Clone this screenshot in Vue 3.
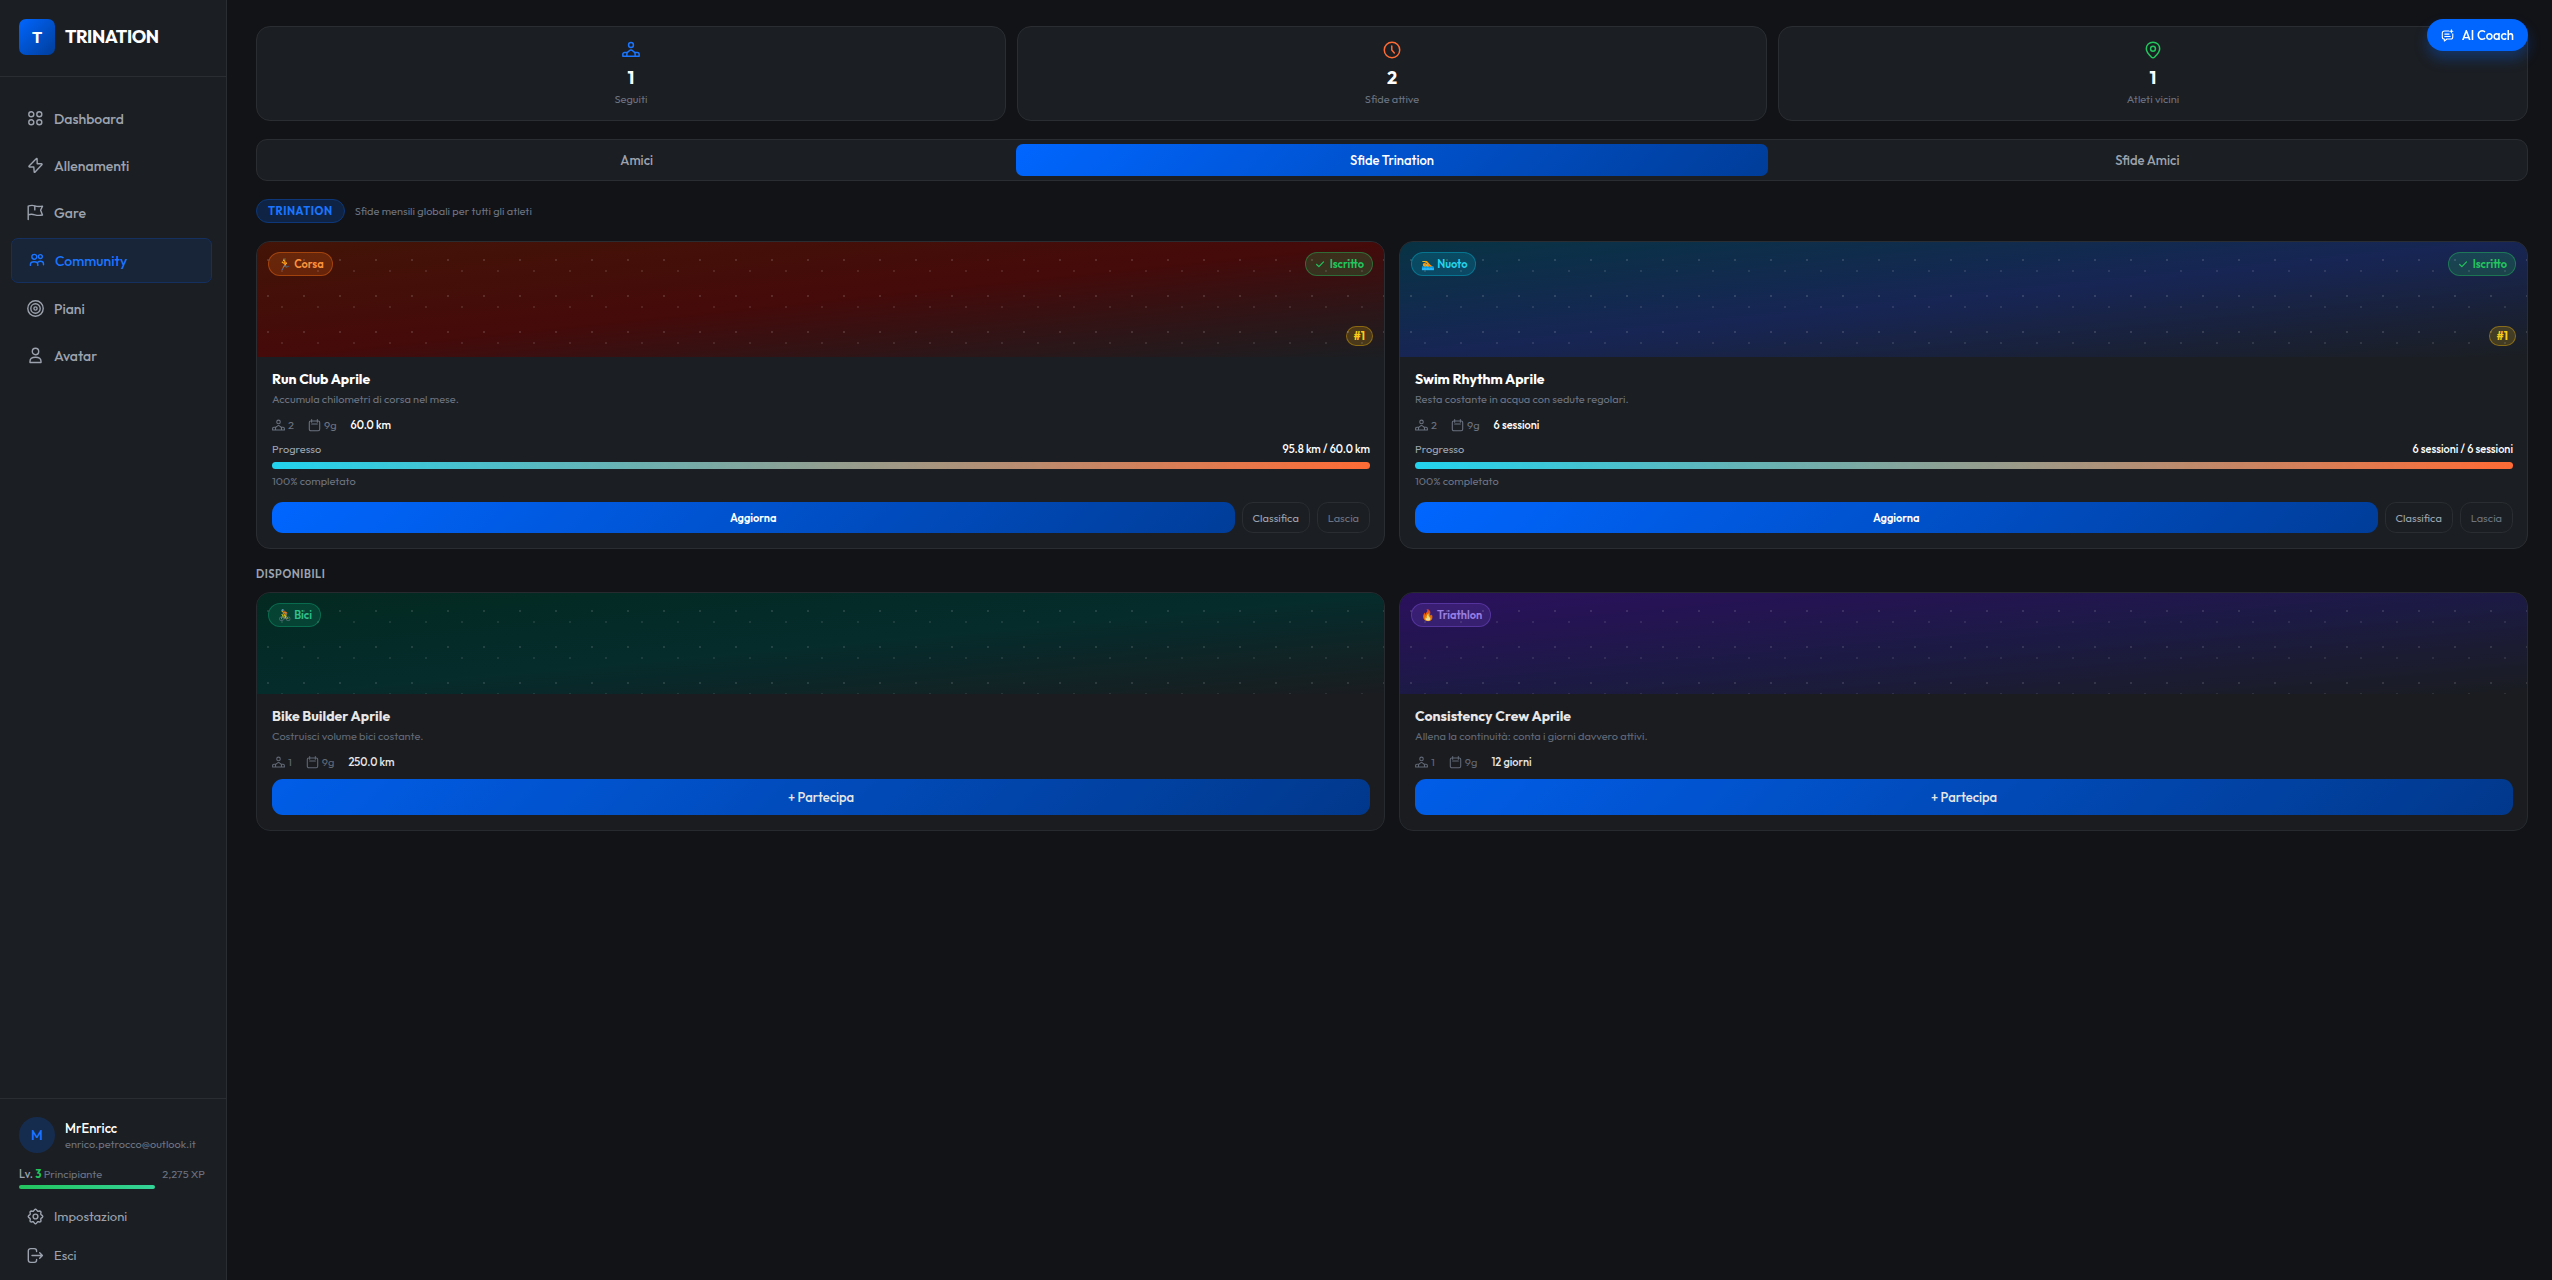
<script setup>
const navItems = [
  { label: 'Dashboard', icon: 'grid' },
  { label: 'Allenamenti', icon: 'bolt' },
  { label: 'Gare', icon: 'flag' },
  { label: 'Community', icon: 'people', active: true },
  { label: 'Piani', icon: 'target' },
  { label: 'Avatar', icon: 'person' },
]

const accountItems = [
  { label: 'Impostazioni', icon: 'gear' },
  { label: 'Esci', icon: 'exit' },
]

const stats = [
  { value: '1', label: 'Seguiti', icon: 'group', tone: 'blue' },
  { value: '2', label: 'Sfide attive', icon: 'clock', tone: 'orange' },
  { value: '1', label: 'Atleti vicini', icon: 'pin', tone: 'green' },
]

const tabs = [
  { label: 'Amici' },
  { label: 'Sfide Trination', active: true },
  { label: 'Sfide Amici' },
]

const joined = [
  {
    sport: 'run', emoji: '🏃', tag: 'Corsa', title: 'Run Club Aprile',
    text: 'Accumula chilometri di corsa nel mese.',
    people: 2, days: '9g', goal: '60.0 km', progress: '95.8 km / 60.0 km', percent: 100, rank: '#1',
  },
  {
    sport: 'swim', emoji: '🏊', tag: 'Nuoto', title: 'Swim Rhythm Aprile',
    text: 'Resta costante in acqua con sedute regolari.',
    people: 2, days: '9g', goal: '6 sessioni', progress: '6 sessioni / 6 sessioni', percent: 100, rank: '#1',
  },
]

const available = [
  {
    sport: 'bike', emoji: '🚴', tag: 'Bici', title: 'Bike Builder Aprile',
    text: 'Costruisci volume bici costante.', people: 1, days: '9g', goal: '250.0 km',
  },
  {
    sport: 'tri', emoji: '🔥', tag: 'Triathlon', title: 'Consistency Crew Aprile',
    text: 'Allena la continuità: conta i giorni davvero attivi.', people: 1, days: '9g', goal: '12 giorni',
  },
]

function gearOutline() {
  const points = []
  for (let i = 0; i < 48; i++) {
    const a = (i / 48) * Math.PI * 2
    const r = 6.5 + 0.8 * Math.cos(a * 8)
    points.push(`${(8.5 + r * Math.sin(a)).toFixed(2)} ${(8.5 - r * Math.cos(a)).toFixed(2)}`)
  }
  return `M${points.join('L')}Z`
}

const icons = {
  grid: 'M4.300 1.800a2.500 2.500 0 1 1 0 5 2.500 2.500 0 0 1 0-5ZM12.300 1.800a2.500 2.500 0 1 1 0 5 2.500 2.500 0 0 1 0-5ZM4.300 9.800a2.500 2.500 0 1 1 0 5 2.500 2.500 0 0 1 0-5ZM12.300 9.800a2.500 2.500 0 1 1 0 5 2.500 2.500 0 0 1 0-5Z',
  bolt: 'M9.200 1.700 2.100 9c-.4.5-.1 1 .5 1h4.200l.4 4.900c0 .5.600.6.900.2l6.800-7.300c.4-.5.100-1-.5-1h-4.200l-.1-4.900c0-.5-.6-.6-.9-.2Z',
  flag: 'M1.200 15.600V2.200C3 1.400 5.500 1 7.800 1.800s5 .9 7.700.3l-1.900 4.200 1.900 4.700c-2.700.6-5.200.5-7.700-.2s-4.700-.7-6.600.1M7.800 1.900v4',
  people: 'M6.300 2.400a2.400 2.400 0 1 1 0 4.900 2.400 2.400 0 0 1 0-4.900ZM12.400 2.600a1.900 1.900 0 1 1 0 3.900 1.900 1.900 0 0 1 0-3.900ZM2.400 13.400v-1c0-1.600 1.700-2.700 3.700-2.700s3.700 1.100 3.700 2.700v1M9.800 10.200c.7-.7 1.600-1 2.600-1 1.700 0 3.100 1 3.100 2.500v1.100',
  target: 'M8.500.8a7.700 7.700 0 1 1 0 15.400A7.700 7.700 0 0 1 8.500.8ZM8.500 3.800a4.700 4.700 0 1 1 0 9.400 4.700 4.700 0 0 1 0-9.400ZM8.500 6.900a1.600 1.600 0 1 1 0 3.200 1.600 1.600 0 0 1 0-3.200Z',
  person: 'M8.500 1.300a3.200 3.200 0 1 1 0 6.400 3.200 3.200 0 0 1 0-6.400ZM3 15.500v-1.300c0-2.500 2.200-4 5.500-4s5.500 1.500 5.500 4v1.300Z',
  gear: gearOutline() + 'M8.500 6.100a2.400 2.400 0 1 1 0 4.800 2.400 2.400 0 0 1 0-4.800Z',
  exit: 'M9.600 4.600V3.900A2.300 2.300 0 0 0 7.300 1.600H3.600A2.300 2.300 0 0 0 1.300 3.900v9.200a2.300 2.300 0 0 0 2.300 2.300h3.700a2.300 2.300 0 0 0 2.300-2.300v-.7M5 8.500h10.300M12.700 5.700l2.700 2.800-2.700 2.800',
  group: 'M8.500 1.500a2.300 2.300 0 1 1 0 4.600 2.300 2.300 0 0 1 0-4.600ZM4.600 14.400v-2.200c0-.8.4-1.400 1-1.900l1.200-1c.9-.9 2.500-.9 3.400 0l1.200 1c.6.5 1 1.100 1 1.900v2.200M4.600 10.900H2.500c-1 0-1.700.7-1.700 1.700v1.800h15.400v-1.800c0-1-.7-1.700-1.700-1.700h-2.100',
  clock: 'M8.500 1.200a7.300 7.300 0 1 1 0 14.600 7.300 7.300 0 0 1 0-14.600ZM8.300 4.700v3.900l2.400 2.700',
  pin: 'M8.500 1.100c3.600 0 6.300 2.700 6.300 6.200 0 3.200-2.600 5.700-4.700 7.800-.9.900-2.300.9-3.200 0-2.100-2.100-4.700-4.600-4.700-7.800 0-3.500 2.700-6.200 6.300-6.200ZM8.500 5a2.300 2.300 0 1 1 0 4.600 2.300 2.300 0 0 1 0-4.600Z',
  calendar: 'M3.600 2.600h9.800c1.100 0 1.900.8 1.900 1.900v9c0 1.100-.8 1.900-1.900 1.900H3.600c-1.100 0-1.900-.8-1.900-1.900v-9c0-1.100.8-1.900 1.900-1.900ZM4.800.8v3.400M12.200.8v3.400M4.800 6.600h7.400',
  chat: 'M10.300 2.700H4.400C2.800 2.700 1.700 3.800 1.700 5.400v5c0 1.600 1.100 2.700 2.700 2.700v2.700l3.300-2.700h5c1.600 0 2.700-1.100 2.700-2.700V6.300M5 6.700h5.600M5 9.700h7M13.600 1v3.800M11.700 2.900h3.800',
  check: 'M2.800 9.300 6.600 13 14.500 4.800',
}
</script>

<template>
  <div class="app">
    <aside class="sidebar">
      <div class="brand">
        <span class="logo">T</span>
        <span class="brand-name">TRINATION</span>
      </div>

      <nav class="nav" aria-label="Principale">
        <a v-for="item in navItems" :key="item.label" href="#" class="nav-link" :class="{ active: item.active }">
          <svg class="icon" viewBox="0 0 17 17"><path :d="icons[item.icon]" /></svg>
          {{ item.label }}
        </a>
      </nav>

      <div class="account">
        <div class="profile">
          <span class="avatar">M</span>
          <div>
            <div class="user-name">MrEnricc</div>
            <div class="user-mail">enrico.petrocco@outlook.it</div>
          </div>
        </div>
        <div class="level">
          <span><span class="lv">Lv. <b>3</b></span> Principiante</span>
          <span>2,275 XP</span>
        </div>
        <div class="level-bar"><div class="level-fill" :style="{ width: '73%' }"></div></div>
        <a v-for="item in accountItems" :key="item.label" href="#" class="account-link">
          <svg class="icon" viewBox="0 0 17 17"><path :d="icons[item.icon]" /></svg>
          {{ item.label }}
        </a>
      </div>
    </aside>

    <main class="main">
      <section class="stats">
        <div v-for="s in stats" :key="s.label" class="stat">
          <svg class="icon stat-icon" :class="s.tone" viewBox="0 0 17 17"><path :d="icons[s.icon]" /></svg>
          <strong class="stat-value">{{ s.value }}</strong>
          <span class="stat-label">{{ s.label }}</span>
        </div>
      </section>

      <div class="tabs" role="tablist">
        <button v-for="t in tabs" :key="t.label" type="button" role="tab" :aria-selected="!!t.active" class="tab" :class="{ active: t.active }">
          {{ t.label }}
        </button>
      </div>

      <div class="intro">
        <span class="intro-badge">TRINATION</span>
        <span class="intro-text">Sfide mensili globali per tutti gli atleti</span>
      </div>

      <section class="cards">
        <article v-for="c in joined" :key="c.title" class="card">
          <div class="banner tall" :class="c.sport">
            <span class="tag">{{ c.emoji }} {{ c.tag }}</span>
            <span class="joined">
              <svg class="icon check" viewBox="0 0 17 17"><path :d="icons.check" /></svg>
              Iscritto
            </span>
            <span class="rank">{{ c.rank }}</span>
          </div>
          <div class="body">
            <h3>{{ c.title }}</h3>
            <p class="text">{{ c.text }}</p>
            <div class="meta">
              <span><svg class="icon small" viewBox="0 0 17 17"><path :d="icons.group" /></svg>{{ c.people }}</span>
              <span><svg class="icon small" viewBox="0 0 17 17"><path :d="icons.calendar" /></svg>{{ c.days }}</span>
              <strong>{{ c.goal }}</strong>
            </div>
            <div class="progress-head">
              <span>Progresso</span>
              <strong>{{ c.progress }}</strong>
            </div>
            <div class="progress"><div class="progress-fill" :style="{ width: c.percent + '%' }"></div></div>
            <div class="percent">{{ c.percent }}% completato</div>
            <div class="actions">
              <button type="button" class="btn primary">Aggiorna</button>
              <button type="button" class="btn outline">Classifica</button>
              <button type="button" class="btn outline faint">Lascia</button>
            </div>
          </div>
        </article>
      </section>

      <h2 class="section-title">DISPONIBILI</h2>

      <section class="cards">
        <article v-for="c in available" :key="c.title" class="card dimmed">
          <div class="banner" :class="c.sport">
            <span class="tag">{{ c.emoji }} {{ c.tag }}</span>
          </div>
          <div class="body">
            <h3>{{ c.title }}</h3>
            <p class="text">{{ c.text }}</p>
            <div class="meta">
              <span><svg class="icon small" viewBox="0 0 17 17"><path :d="icons.group" /></svg>{{ c.people }}</span>
              <span><svg class="icon small" viewBox="0 0 17 17"><path :d="icons.calendar" /></svg>{{ c.days }}</span>
              <strong>{{ c.goal }}</strong>
            </div>
            <button type="button" class="btn primary join">+ Partecipa</button>
          </div>
        </article>
      </section>
    </main>

    <button type="button" class="coach">
      <svg class="icon small" viewBox="0 0 17 17"><path :d="icons.chat" /></svg>
      AI Coach
    </button>
  </div>
</template>

<style>
body {
  margin: 0;
  background: #121317;
}
</style>

<style scoped>
.app {
  --surface: #1b1e22;
  --line: #2a2d31;
  --muted: #6b7280;
  --soft: #9ca3af;
  --blue: #0066ff;
  --blue-text: #1a75ff;
  --blue-fill: linear-gradient(135deg, #0066ff, #003d99);
  display: flex;
  min-height: 100vh;
  background: #121317;
  color: #fff;
  font-family: Outfit, Lato, sans-serif;
  font-size: 11px;
  line-height: 16px;
}
.app * {
  box-sizing: border-box;
}
button {
  border: 0;
  padding: 0;
  font: inherit;
  cursor: pointer;
}
a {
  text-decoration: none;
}
.icon {
  width: 17px;
  height: 17px;
  flex: none;
  fill: none;
  stroke: currentColor;
  stroke-width: 1.4;
  stroke-linecap: round;
  stroke-linejoin: round;
}
.icon.small {
  width: 13px;
  height: 13px;
}

/* Sidebar */
.sidebar {
  position: sticky;
  top: 0;
  flex: none;
  display: flex;
  flex-direction: column;
  width: 227px;
  height: 100vh;
  border-right: 1px solid var(--line);
  background: var(--surface);
}
.brand {
  display: flex;
  align-items: center;
  gap: 10px;
  padding: 19px 19px 21px;
  border-bottom: 1px solid var(--line);
}
.logo {
  display: grid;
  place-items: center;
  width: 36px;
  height: 36px;
  border-radius: 7px;
  background: var(--blue-fill);
  font-size: 16px;
  font-weight: 700;
}
.brand-name {
  font-size: 18px;
  font-weight: 700;
  letter-spacing: -0.025em;
}
.nav {
  flex: 1;
  display: flex;
  flex-direction: column;
  gap: 4px;
  padding: 20px 14px 20px 11px;
}
.nav-link {
  display: flex;
  align-items: center;
  gap: 10px;
  height: 43px;
  padding: 0 16px;
  border-radius: 7px;
  color: var(--soft);
  font-size: 14px;
  font-weight: 500;
}
.nav-link.active {
  height: 45px;
  border: 1px solid #15305f;
  background: #182438;
  color: var(--blue-text);
}
.account {
  padding: 18px 11px 7px;
  border-top: 1px solid var(--line);
}
.profile {
  display: flex;
  align-items: center;
  gap: 10px;
  padding: 0 8px;
}
.avatar {
  display: grid;
  place-items: center;
  width: 36px;
  height: 36px;
  border-radius: 50%;
  background: #162c4f;
  color: var(--blue-text);
  font-size: 14px;
  font-weight: 500;
}
.user-name {
  font-size: 13px;
  font-weight: 500;
  line-height: 18px;
}
.user-mail {
  color: var(--muted);
  line-height: 14px;
}
.level {
  display: flex;
  justify-content: space-between;
  margin-top: 13px;
  padding: 0 10px 0 8px;
  color: var(--muted);
}
.lv {
  color: var(--soft);
  font-weight: 500;
}
.lv b {
  color: #22c55e;
  font-weight: 700;
}
.level-bar {
  height: 4px;
  margin: 3px 10px 9px 8px;
}
.level-fill {
  height: 100%;
  border-radius: 2px;
  background: linear-gradient(90deg, #22c55e, #34d399);
}
.account-link {
  display: flex;
  align-items: center;
  gap: 10px;
  height: 36px;
  margin-top: 3px;
  padding: 0 16px;
  color: var(--soft);
  font-size: 13px;
}

/* Main column */
.main {
  flex: 1;
  min-width: 0;
  padding: 26px 24px 24px 29px;
}
.stats {
  display: grid;
  grid-template-columns: repeat(3, 1fr);
  gap: 11px;
}
.stat {
  display: flex;
  flex-direction: column;
  align-items: center;
  padding: 14px 14px 13px;
  border: 1px solid var(--line);
  border-radius: 14px;
  background: var(--surface);
}
.stat-icon {
  width: 18px;
  height: 18px;
  margin-bottom: 7px;
}
.blue {
  color: var(--blue-text);
}
.orange {
  color: #ff6b35;
}
.green {
  color: #22c55e;
}
.stat-value {
  font-size: 18px;
  font-weight: 700;
  line-height: 24px;
}
.stat-label {
  margin-top: 1px;
  color: var(--muted);
}
.tabs {
  display: grid;
  grid-template-columns: repeat(3, 1fr);
  gap: 4px;
  margin-top: 18px;
  padding: 4px;
  border: 1px solid var(--line);
  border-radius: 11px;
  background: var(--surface);
}
.tab {
  height: 32px;
  border-radius: 7px;
  background: none;
  color: var(--soft);
  font-size: 13px;
  font-weight: 500;
}
.tab.active {
  background: var(--blue-fill);
  color: #fff;
}
.intro {
  display: flex;
  align-items: center;
  gap: 10px;
  margin: 18px 0;
}
.intro-badge {
  height: 24px;
  padding: 0 11px;
  border: 1px solid #0d3778;
  border-radius: 12px;
  background: #0f2444;
  color: var(--blue-text);
  font-weight: 700;
  line-height: 22px;
  letter-spacing: 0.05em;
}
.intro-text {
  color: var(--muted);
}
.section-title {
  margin: 18px 0 11px;
  color: var(--soft);
  font-size: 11px;
  font-weight: 600;
  line-height: 14px;
  letter-spacing: 0.05em;
}

/* Challenge cards */
.cards {
  display: grid;
  grid-template-columns: repeat(2, 1fr);
  gap: 14px;
}
.card {
  overflow: hidden;
  border: 1px solid var(--line);
  border-radius: 14px;
  background: var(--surface);
}
.card.dimmed {
  opacity: 0.9;
}
.banner {
  position: relative;
  height: 101px;
}
.banner.tall {
  height: 115px;
}
.banner::after {
  content: '';
  position: absolute;
  inset: 0;
  background-image:
    radial-gradient(circle at 30% 50%, rgba(255, 255, 255, 0.13) 1px, transparent 1px),
    radial-gradient(circle at 70% 80%, rgba(255, 255, 255, 0.1) 1px, transparent 1px);
  background-size: 36px 36px;
  pointer-events: none;
}
.run {
  --tag: #fb923c;
  --tag-bg: rgba(249, 115, 22, 0.2);
  --tag-line: rgba(249, 115, 22, 0.4);
  background: linear-gradient(to bottom right, #431407, #450a0a, var(--surface));
}
.swim {
  --tag: #22d3ee;
  --tag-bg: rgba(6, 182, 212, 0.2);
  --tag-line: rgba(6, 182, 212, 0.4);
  background: linear-gradient(to bottom right, #083344, #172554, var(--surface));
}
.bike {
  --tag: #34d399;
  --tag-bg: rgba(16, 185, 129, 0.2);
  --tag-line: rgba(16, 185, 129, 0.4);
  background: linear-gradient(to bottom right, #022c22, #042f2e, var(--surface));
}
.tri {
  --tag: #a78bfa;
  --tag-bg: rgba(139, 92, 246, 0.2);
  --tag-line: rgba(139, 92, 246, 0.4);
  background: linear-gradient(to bottom right, #2e1065, #1e1b4b, var(--surface));
}
.tag,
.joined,
.rank {
  position: absolute;
  display: flex;
  align-items: center;
  border: 1px solid;
  border-radius: 12px;
  font-weight: 600;
}
.tag {
  top: 10px;
  left: 11px;
  height: 24px;
  padding: 0 8px 0 9px;
  border-color: var(--tag-line);
  background: var(--tag-bg);
  color: var(--tag);
}
.joined {
  top: 10px;
  right: 11px;
  gap: 5px;
  height: 24px;
  padding: 0 8px 0 9px;
  border-color: rgba(34, 197, 94, 0.4);
  background: rgba(34, 197, 94, 0.2);
  color: #22c55e;
}
.check {
  width: 10px;
  height: 10px;
  stroke-width: 2;
}
.rank {
  right: 11px;
  bottom: 11px;
  height: 20px;
  padding: 0 7px;
  border-color: rgba(234, 179, 8, 0.4);
  background: rgba(234, 179, 8, 0.2);
  color: #facc15;
  font-weight: 700;
}
.body {
  padding: 13px 14px 15px 15px;
}
h3 {
  margin: 0;
  font-size: 14px;
  font-weight: 700;
  line-height: 18px;
}
.text {
  margin: 3px 0 10px;
  color: var(--muted);
}
.meta {
  display: flex;
  gap: 14px;
  color: var(--muted);
}
.meta span {
  display: flex;
  align-items: center;
  gap: 3px;
}
.meta strong,
.progress-head strong {
  color: #fff;
  font-weight: 500;
}
.progress-head {
  display: flex;
  justify-content: space-between;
  margin-top: 8px;
  color: var(--soft);
}
.progress {
  height: 7px;
  margin: 5px 0 4px;
}
.progress-fill {
  height: 100%;
  border-radius: 4px;
  background: linear-gradient(90deg, #22d3ee, #ff6b35);
}
.percent {
  color: var(--muted);
}
.actions {
  display: flex;
  gap: 7px;
  margin-top: 13px;
}
.btn {
  height: 31px;
  border-radius: 11px;
  color: #fff;
}
.primary {
  flex: 1;
  background: var(--blue-fill);
  font-weight: 600;
}
.outline {
  padding: 0 10px;
  border: 1px solid var(--line);
  background: none;
  color: var(--soft);
}
.faint {
  color: var(--muted);
}
.join {
  width: 100%;
  height: 36px;
  margin-top: 9px;
  font-size: 13px;
  font-weight: 500;
}
.coach {
  position: fixed;
  top: 19px;
  right: 24px;
  display: flex;
  align-items: center;
  gap: 8px;
  height: 32px;
  padding: 0 14px;
  border-radius: 16px;
  background: var(--blue);
  box-shadow: 0 8px 14px rgba(0, 102, 255, 0.3);
  color: #fff;
  font-size: 13px;
  font-weight: 500;
}
</style>
